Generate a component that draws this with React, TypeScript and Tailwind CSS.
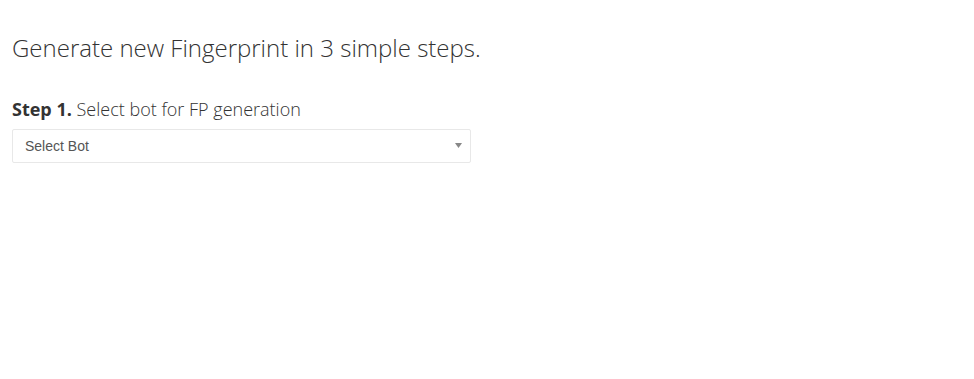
export default function App() {
  return (
    <div className="min-h-screen bg-white px-3 pt-[30px]" style={{ fontFamily: '"Open Sans", sans-serif' }}>
      <h1 className="text-[24px] font-light leading-[36px] text-[#333]">
        Generate new Fingerprint in 3 simple steps.
      </h1>

      <div className="mt-[30px] w-[459px]">
        <h2 className="text-[18px] font-light leading-[26px] text-[#333]">
          <span className="font-bold">Step 1.</span> Select bot for FP generation
        </h2>
        <div className="relative mt-[7px]">
          <select
            className="h-[34px] w-full appearance-none rounded-[2px] border border-[#e8e8e8] bg-white pl-[12px] text-[14px] text-[#555] outline-none"
            style={{ fontFamily: '"Liberation Sans", Arial, sans-serif' }}
            defaultValue=""
          >
            <option value="">Select Bot</option>
          </select>
          <svg className="pointer-events-none absolute right-[9px] top-[14px]" width="7" height="5" viewBox="0 0 7 5">
            <path d="M0 0h7L3.5 5z" fill="#888" />
          </svg>
        </div>
      </div>
    </div>
  );
}
